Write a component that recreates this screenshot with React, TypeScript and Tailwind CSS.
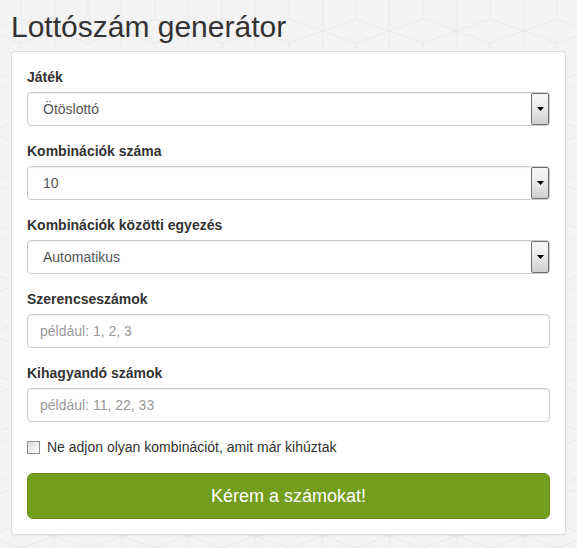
import React from "react";

function SelectBox({ value }: { value: string }) {
  return (
    <div className="flex h-[34px] w-full items-stretch rounded-[4px] border border-[#cccccc] bg-white shadow-[inset_0_1px_1px_rgba(0,0,0,0.075)]">
      <div className="flex flex-1 items-center pl-[15px] text-[14px] text-[#555555]">{value}</div>
      <div className="flex w-[18px] items-center justify-center rounded-[2px] border border-[#6f6f6f] bg-gradient-to-b from-[#f7f7f7] via-[#e9e9e9] to-[#cfcfcf]">
        <svg width="7" height="4" viewBox="0 0 7 4">
          <path d="M0 0 H7 L3.5 4 Z" fill="#000" />
        </svg>
      </div>
    </div>
  );
}

function TextBox({ placeholder }: { placeholder: string }) {
  return (
    <div className="flex h-[34px] w-full items-center rounded-[4px] border border-[#cccccc] bg-white px-[12px] text-[14px] text-[#999999] shadow-[inset_0_1px_1px_rgba(0,0,0,0.075)]">
      {placeholder}
    </div>
  );
}

function Label({ children }: { children: React.ReactNode }) {
  return <div className="mb-[5px] h-[20px] text-[14px] font-bold leading-[20px] text-[#333333]">{children}</div>;
}

export default function App() {
  return (
    <div className="relative h-[548px] w-[577px] overflow-hidden bg-[#f3f3f3] font-['Liberation_Sans',Arial,sans-serif] leading-[20px]">
      <svg className="absolute inset-0" width="577" height="548">
        <defs>
          <pattern id="cubes" x="54.5" y="31" width="67" height="101" patternUnits="userSpaceOnUse">
            <path
              d="M0 0 V38.5 L33.5 50.5 L67 38.5 V0 M0 0 L33.5 12 L67 0 M33.5 12 V89 M0 101 V62.5 L33.5 50.5 L67 62.5 V101 M0 101 L33.5 89 L67 101"
              fill="none"
              stroke="#e8e8e8"
              strokeWidth="1"
            />
          </pattern>
        </defs>
        <rect width="577" height="548" fill="url(#cubes)" />
      </svg>
      <div className="relative px-[11px]">
        <h1 className="mt-[10px] mb-[8px] text-[30px] leading-[33px] text-[#333333]">Lottószám generátor</h1>
        <div className="rounded-[4px] border border-[#dddddd] bg-white px-[15px] pt-[15px] pb-[15px] shadow-[0_1px_2px_rgba(0,0,0,0.06)]">
          <div className="mb-[15px]">
            <Label>Játék</Label>
            <SelectBox value="Ötöslottó" />
          </div>
          <div className="mb-[15px]">
            <Label>Kombinációk száma</Label>
            <SelectBox value="10" />
          </div>
          <div className="mb-[15px]">
            <Label>Kombinációk közötti egyezés</Label>
            <SelectBox value="Automatikus" />
          </div>
          <div className="mb-[15px]">
            <Label>Szerencseszámok</Label>
            <TextBox placeholder="például: 1, 2, 3" />
          </div>
          <div className="mb-[15px]">
            <Label>Kihagyandó számok</Label>
            <TextBox placeholder="például: 11, 22, 33" />
          </div>
          <div className="mb-[16px] flex h-[20px] items-center">
            <span className="h-[13px] w-[13px] border border-[#8e8f8f] bg-gradient-to-br from-[#dcdcdc] to-[#fbfbfb]" />
            <span className="ml-[7px] text-[14px] text-[#333333]">Ne adjon olyan kombinációt, amit már kihúztak</span>
          </div>
          <button className="flex h-[46px] w-full items-center justify-center rounded-[6px] border border-[#6a8f19] bg-[#739e1d] text-[18px] text-white">
            Kérem a számokat!
          </button>
        </div>
      </div>
    </div>
  );
}
